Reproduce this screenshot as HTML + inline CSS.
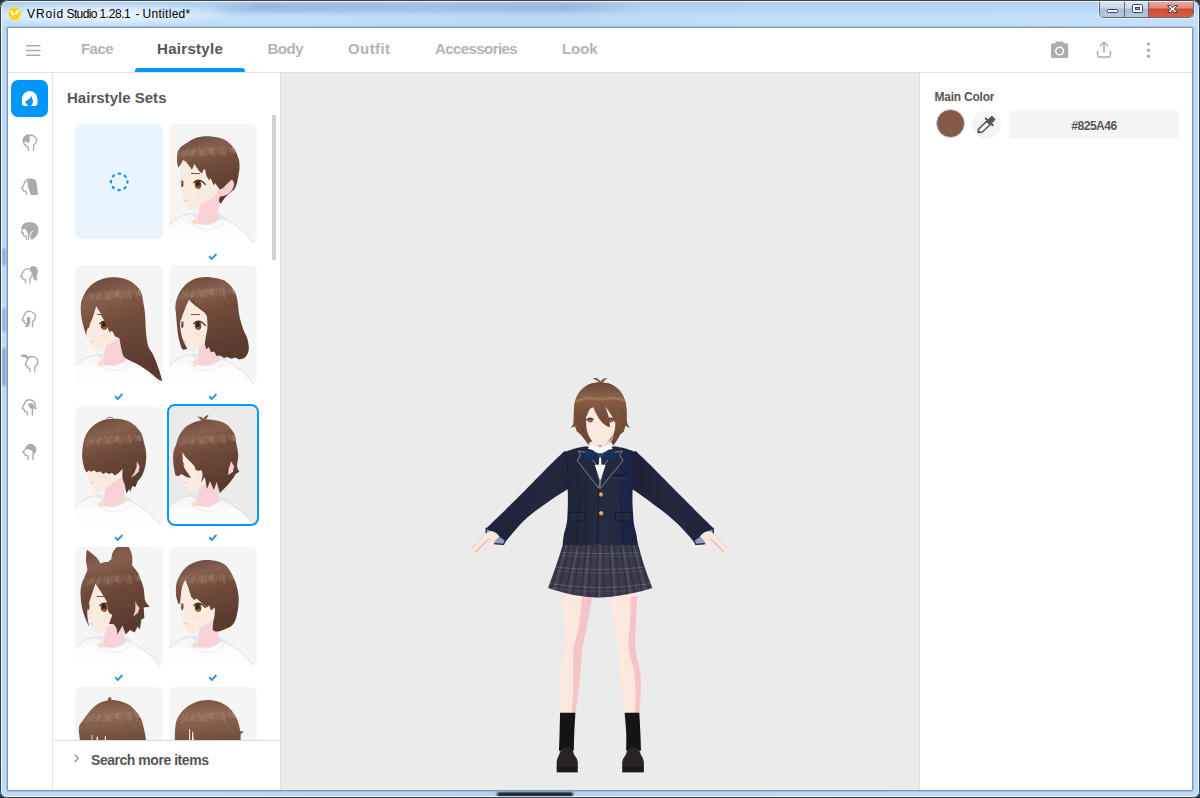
<!DOCTYPE html>
<html lang="en">
<head>
<meta charset="utf-8">
<title>VRoid Studio 1.28.1 - Untitled*</title>
<style>
*{box-sizing:border-box;margin:0;padding:0}
html,body{width:1200px;height:798px;overflow:hidden;background:#2a313b;font-family:"Liberation Sans",sans-serif}
svg{display:block;position:absolute;overflow:visible}
#win{position:absolute;left:0;top:0;width:1200px;height:798px;overflow:hidden;
 border-radius:8px 8px 7px 7px;
 background:linear-gradient(90deg,#bcdcfb 0,#badafa 18%,#b4d3f3 45%,#bbdafa 70%,#bedcfb 100%)}
#glow{position:absolute;left:-10px;top:3px;width:240px;height:22px;background:radial-gradient(ellipse at 45% 50%,rgba(255,255,255,.7) 0,rgba(255,255,255,.45) 40%,rgba(255,255,255,0) 75%)}
#win .smudge{position:absolute;left:205px;top:3px;width:430px;height:9px;background:linear-gradient(90deg,rgba(110,140,185,0),rgba(110,140,185,.4) 12%,rgba(120,150,195,.3) 50%,rgba(110,140,185,.35) 85%,rgba(110,140,185,0));filter:blur(2.500px)}
#frame-outer{position:absolute;left:0;top:0;width:1200px;height:798px;border:1px solid #39424f;border-radius:8px 8px 7px 7px;box-shadow:inset 0 0 0 1px rgba(255,255,255,.75);z-index:9}
.smg{position:absolute;background:#1a2233;filter:blur(1.2px);border-radius:2px}
#client-border{position:absolute;left:7px;top:27px;width:1186px;height:764px;background:#8294ab;border-radius:2px;box-shadow:0 0 0 1px rgba(150,172,200,.55)}
#client{position:absolute;left:8px;top:28px;width:1184px;height:762px;background:#fff;overflow:hidden}
#title{position:absolute;left:27px;top:6.500px;letter-spacing:.02px;font-size:12px;line-height:15px;color:#000;white-space:nowrap}
#title span{position:absolute;top:0}
#tbg{position:absolute;left:2px;top:2px;width:1196px;height:25px;background:linear-gradient(180deg,rgba(150,180,215,.28) 0,rgba(170,195,225,.12) 40%,rgba(255,255,255,.16) 55%,rgba(255,255,255,.06) 100%)}
#caps{position:absolute;left:1099px;top:0;width:95px;height:18px;border:1px solid #5b6776;border-top:none;border-radius:0 0 5px 5px;overflow:hidden;box-shadow:0 0 0 1px rgba(255,255,255,.55)}
#caps div{position:absolute;top:0;height:18px}
#cmin{left:0;width:25px;background:linear-gradient(#dfe9f3 0,#c9d7e6 45%,#a9bdd4 50%,#b9cbe0 100%);border-right:1px solid #5b6776}
#cmax{left:25px;width:24px;background:linear-gradient(#dfe9f3 0,#c9d7e6 45%,#a9bdd4 50%,#b9cbe0 100%);border-right:1px solid #5b6776}
#ccls{left:49px;width:45px;background:linear-gradient(#eeb2a5 0,#e08b78 45%,#cf4a30 50%,#d9644a 100%)}
#nav{position:absolute;left:0;top:0;width:1184px;height:45px;border-bottom:1px solid #e0e0e0;background:#fff}
.tab{position:absolute;top:11px;font-size:15px;line-height:20px;font-weight:bold;color:#b4b4b4;white-space:nowrap}
.tab.on{color:#555}
#uline{position:absolute;left:127px;top:40px;width:110px;height:4px;background:#0096fa;border-radius:3px 3px 0 0}
#side{position:absolute;left:0;top:45px;width:45px;height:717px;background:#fff;border-right:1px solid #e2e2e2}
#selbtn{position:absolute;left:3px;top:7px;width:37px;height:37px;border-radius:7px;background:#0096fa}
#list{position:absolute;left:45px;top:45px;width:227px;height:717px;background:#fff;overflow:hidden}
#list h2{position:absolute;left:14px;top:14.600px;font-size:15px;line-height:20px;color:#585858;font-weight:bold;white-space:nowrap;letter-spacing:.02px}
#sbar{position:absolute;left:219px;top:42px;width:4px;height:145px;background:#d2d2d2;border-radius:1px}
.card{position:absolute;width:88px;height:120px;border-radius:7px;background:#f5f5f5;overflow:hidden}
.card.none{background:#e8f4fe;height:115px}
.card.sel{background:#ebebeb}
#selring{position:absolute;left:114.300px;top:330.900px;width:91.600px;height:122.400px;border:2px solid #0a98f8;border-radius:8px}
.chk{position:absolute;width:9px;height:7px}
#foot{position:absolute;left:0;top:667px;width:227px;height:50px;background:#fff;border-top:1px solid #dcdcdc}
#foot span{position:absolute;left:38px;top:10px;font-size:14px;line-height:18px;font-weight:bold;color:#555;white-space:nowrap;letter-spacing:-.46px}
#view{position:absolute;left:272px;top:45px;width:640px;height:717px;background:#ebebeb;overflow:hidden;border-left:1px solid #dedede}
#right{position:absolute;left:911px;top:45px;width:273px;height:717px;background:#fff;border-left:1px solid #dedede}
#right .lbl{position:absolute;left:14.500px;top:17px;letter-spacing:-.22px;font-size:12px;line-height:14px;font-weight:bold;color:#555;white-space:nowrap}
#sw{position:absolute;left:15.500px;top:36.300px;width:29px;height:29px;border-radius:50%;background:#825a46;border:1px solid #d8d0cc}
#dropper{position:absolute;left:52px;top:36.500px;width:29px;height:29px;border-radius:50%;background:#f5f5f5}
#hex{position:absolute;left:89px;top:36.500px;width:170px;height:29px;border-radius:4px;background:#f5f5f5;text-align:center;font-size:12px;line-height:32px;font-weight:bold;color:#555;letter-spacing:-.45px}
</style>
</head>
<body>
<div id="win"><div id="tbg"></div><div id="glow"></div><div class="smudge"></div><div id="frame-outer"></div><div class="smg" style="left:497px;top:792px;width:76px;height:5px"></div><div class="smg" style="left:2px;top:248px;width:4px;height:18px;opacity:.35;background:#3a5a8a"></div><div class="smg" style="left:2px;top:308px;width:4px;height:24px;opacity:.3;background:#3a5a8a"></div><div class="smg" style="left:2px;top:348px;width:4px;height:38px;opacity:.4;background:#3a5a8a"></div><svg style="left:7px;top:6px" width="16" height="16" viewBox="0 0 16 16"><path d="M4.600 2L10.900 2L14 7.750L10.900 13.500L4.600 13.500L1.500 7.750Z" fill="#ffd500" stroke="#ffdc2e" stroke-width="1" stroke-linejoin="round"/><path d="M4.300 5.600L7.200 10.200L11.200 4.800" fill="none" stroke="#fff" stroke-width="1.800" stroke-linejoin="round" stroke-linecap="round"/><path d="M6.600 9.200L7.300 10.600L8.400 9.200Z" fill="#ff9a1a" stroke="#ff9a1a" stroke-width=".6"/></svg><div id="title"><span style="left:0;letter-spacing:.9px">VRoid</span> <span style="left:39.500px;letter-spacing:-.62px">Studio</span> <span style="left:72.500px;letter-spacing:-.42px">1.28.1</span> <span style="left:108.500px">-</span> <span style="left:115.500px;letter-spacing:.3px">Untitled*</span></div><div id="caps"><div id="cmin"></div><div id="cmax"></div><div id="ccls"></div></div><svg style="left:1099px;top:0" width="96" height="20" viewBox="0 0 96 20"><rect x="8.500" y="9.500" width="10" height="3" rx=".8" fill="#fff" stroke="#3d4757" stroke-width="1"/><rect x="33.500" y="4.500" width="10" height="8" rx="1" fill="#fff" stroke="#3d4757" stroke-width="1"/><rect x="36.500" y="7.500" width="4" height="2" fill="#8aa0c0" stroke="#3d4757" stroke-width="1"/><path d="M68.500 5.500L71.500 5.500L73.500 7.800L75.500 5.500L78.500 5.500L75.300 9L78.500 12.500L75.500 12.500L73.500 10.200L71.500 12.500L68.500 12.500L71.700 9Z" fill="#fff" stroke="#3d4757" stroke-width="1" stroke-linejoin="round"/></svg><div id="client-border"></div><div id="client"><div id="nav"><svg style="left:18px;top:17px" width="15" height="11" viewBox="0 0 15 11"><path d="M0 .8H14.400M0 5.500H14.400M0 10.200H14.400" stroke="#adadad" stroke-width="1.500" fill="none"/></svg><div class="tab" style="left:73px;letter-spacing:-0.55px">Face</div><div class="tab on" style="left:149px;letter-spacing:0.3px">Hairstyle</div><div class="tab" style="left:259.5px;letter-spacing:-0.5px">Body</div><div class="tab" style="left:340px;letter-spacing:0.4px">Outfit</div><div class="tab" style="left:427px;letter-spacing:-0.57px">Accessories</div><div class="tab" style="left:554px;letter-spacing:-0.1px">Look</div><div id="uline"></div><svg style="left:1042px;top:12px" width="20" height="20" viewBox="1050 40 20 20"><path fill="#adadad" d="M1056.200 41.400L1063 41.400L1064.400 43.600L1066.800 43.600C1067.700 43.600 1068.200 44.200 1068.200 45L1068.200 56.600C1068.200 57.500 1067.700 58 1066.800 58L1052.400 58C1051.500 58 1051 57.500 1051 56.600L1051 45C1051 44.200 1051.500 43.600 1052.400 43.600L1054.800 43.600Z"/><circle cx="1059.600" cy="51" r="4.600" fill="#fff"/><circle cx="1059.600" cy="51" r="3.100" fill="#adadad"/></svg><svg style="left:1087px;top:12px" width="20" height="20" viewBox="1095 40 20 20"><path fill="none" stroke="#adadad" stroke-width="1.500" stroke-linecap="round" stroke-linejoin="round" d="M1104 52L1104 42.400M1100.400 45.800L1104 42.200L1107.600 45.800M1097.600 51.400L1097.600 55.400C1097.600 56.400 1098.200 57 1099.200 57L1108.800 57C1109.800 57 1110.400 56.400 1110.400 55.400L1110.400 51.400"/></svg><svg style="left:1135px;top:12px" width="12" height="20" viewBox="1143 40 12 20"><circle cx="1148.500" cy="44.100" r="1.700" fill="#adadad"/><circle cx="1148.500" cy="50.200" r="1.700" fill="#adadad"/><circle cx="1148.500" cy="56.200" r="1.700" fill="#adadad"/></svg></div><div id="side"><div id="selbtn"></div><svg style="left:0;top:0" width="44" height="717" viewBox="8 73 44 717" fill="none" stroke-linecap="round" stroke-linejoin="round"><path fill="#fff" d="M29.700 90.900C25.200 90.900 22 94.600 21.900 99.600L21.900 103C21.900 104.800 22.800 105.900 24.400 105.900L27.600 105.900C28 105.900 28.100 105.600 27.800 105.300C26.400 104 25.400 102.400 25.600 100.900C28 100.200 30.200 98.600 31.500 95.800C31.700 97.800 32.200 99.400 33 101C33.100 102.600 32.400 104.200 31.300 105.300C31 105.600 31.100 105.900 31.500 105.900L35 105.900C36.600 105.900 37.500 104.800 37.500 103L37.500 99.600C37.400 94.600 34.200 90.900 29.700 90.900Z"/><path fill="#ababab" d="M22.200 141.200C22.600 138 24.600 135.200 27.600 134.300C28.200 134.100 28.900 134.200 29.400 134.600L29.800 140.400C29.600 141.800 29.200 142.600 28.500 143.300C27.600 142.200 26.600 141.500 25.400 141.400C24.600 141.400 24.200 141.800 23.800 142.200Z"/><path stroke="#ababab" stroke-width="1.35" d="M29.600 135.300C33.400 134.900 36.600 137.400 36.600 140.600C36.600 142.800 35.200 144.200 33.600 145.400L33.500 150.400M23.800 142L24 144.100L25.500 144.700L25.800 146.200L28.200 147.100L28.500 150.400"/><path fill="#ababab" d="M27.300 178.500L31.600 178.500C34.600 178.700 36.600 180.800 36.700 183.600L37.900 194C38 194.500 37.700 194.900 37.200 194.900L31.400 194.900C31 194.900 30.800 194.700 30.600 194.200L28.600 188.600C27.800 186.400 27.400 184 27.300 181.500Z"/><path stroke="#ababab" stroke-width="1.35" d="M27.600 179.400C26 180.200 24.800 181.600 24.300 183L23.700 184.800L21.600 188.100L23.100 188.800L23.400 190.800L26.100 191.700L26.700 194.400"/><path fill="#ababab" d="M21.300 228.400C21.600 225 24 222.600 28 222.200L31.500 222.200C35.600 222.400 38.500 225.400 38.500 229.400C38.500 233.400 36.400 237.200 32.400 239.200L31.200 239.400C30.400 238 30 236.800 30.400 235.600C31 234 32 232.600 33 231.200L32.200 230.600L29.200 235.600L28.300 235C27.800 233 26.600 230.800 24.900 229.100L23.400 229.100L21.600 229Z"/><path stroke="#ababab" stroke-width="1.35" d="M28.500 235L28.800 239.500M22.600 229.200L21.300 232.400L23.100 233L23.400 235.100L26.100 236.300L26.600 239.400"/><path stroke="#ababab" stroke-width="1.35" d="M20.700 276.300L23.100 271.900C23.600 270.300 25 269.200 26.800 268.900C28.400 268.700 29.800 269.300 30.800 270.300C32 271.400 32.500 273 32.400 274.600C32.300 276.200 31.400 277.300 30 278.200L30 283M20.700 276.400L22.500 277L22.500 278.800L25.200 279.700L25.700 283"/><path fill="#ababab" d="M29.700 268.400C30.200 266.800 31.600 265.900 33.400 265.900C36 265.900 37.600 268 37.800 271C37.900 273.600 36.800 275.800 36.700 277.400C36.700 278.200 37 278.800 37.500 279.300C36.800 280.400 35.800 280.700 35 280.400C33.800 279.800 33.200 278.400 33 276.400C32.900 274.600 33.200 272.800 31.800 271C31.200 270.300 30.400 269.400 29.700 268.400Z"/><path stroke="#ababab" stroke-width="1.35" d="M32.400 326.800L32.400 321.900C34.200 320.700 35.400 319.200 35.400 317C35.400 313.800 32.600 311.300 29 311.300C26.400 311.300 24.600 313 24 315.900L22.200 320.100L24 320.700L24.300 322.800L25.800 323.700"/><path fill="#ababab" d="M27 317.600C27 317.200 27.300 316.900 27.700 316.900L29.400 316.900C29.900 316.900 30.200 317.200 30.200 317.700L30.200 320C30.200 322 29.800 324 29 325.600C28.600 326.500 28 327.100 27.200 327.100L25.600 327.100C25.100 327.100 24.900 326.700 25.200 326.300C26.400 324.800 27 323 27 320.800Z"/><path stroke="#ababab" stroke-width="1.35" d="M34.800 371.600L34.800 366.800C36.600 365.600 37.800 364 37.800 362C37.800 358.900 35.200 356.500 32 356.500C29.800 356.500 28.200 357.600 27.400 359.400L26.700 361.100L25.200 364.700L27 365.600L27.300 367.700L29.700 368.600L30 371.600"/><path fill="#ababab" d="M20.600 356.200C21.400 354.900 22.800 354.200 24.400 354.300C26.600 354.500 28.200 356.200 28.800 358.200L27.600 360.200C27 358.800 25.800 357.600 24.200 357.100C23 356.800 21.600 357 20.600 356.200Z"/><path stroke="#ababab" stroke-width="1.35" d="M27.300 415L27 412L24.300 411.100L24 409L22.200 408.100L24.300 403.900C25 401.400 27 399.700 29.600 399.700C33 399.700 35.400 402.400 35.400 405.600C35.400 406.600 35.300 407.400 35 408.200L36.100 408.500M32.400 415L32.400 409"/><path fill="#ababab" d="M28.200 403.200L33 403.200L33.200 405.800L33.800 405.800L33.600 403.400C34.400 404.600 34.800 406 34.800 407.600L33.800 409L32.400 409.400C30.200 408.600 28.600 406.600 28.200 404.600Z"/><path fill="#ababab" d="M25.100 449.200C25.400 446 27.600 443.900 30.600 443.900C34 443.900 36.400 446.400 36.400 449.400C36.400 451.400 35.400 453.200 33.800 454.600L32.800 454.200C33 452.400 32.200 451 30.800 450.100C29.600 449.400 28.200 449.100 26.600 449.200Z"/><path stroke="#ababab" stroke-width="1.35" d="M25.200 449.100L22.800 452.400L24.900 453.300L25.200 455.100L27.900 456L28.200 459.300M33 454.200L33 459.300"/></svg></div><div id="list"><svg width="0" height="0" style="left:-10px;top:-10px"><defs><linearGradient id="hg" x1="0" y1="0" x2="0.25" y2="1"><stop offset="0" stop-color="#6a4537"/><stop offset=".26" stop-color="#875f4e"/><stop offset=".5" stop-color="#734c3c"/><stop offset="1" stop-color="#593a2e"/></linearGradient><linearGradient id="hg2" x1="0" y1="0" x2="0.1" y2="1"><stop offset="0" stop-color="#76503f"/><stop offset=".3" stop-color="#8f6653"/><stop offset=".6" stop-color="#85604d"/><stop offset="1" stop-color="#70493a"/></linearGradient><linearGradient id="sg" x1="0" y1="0" x2="0" y2="1"><stop offset="0" stop-color="#f4f4f7"/><stop offset=".45" stop-color="#fdfdfd"/><stop offset="1" stop-color="#ffffff"/></linearGradient><filter id="b1" x="-20%" y="-20%" width="140%" height="140%"><feGaussianBlur stdDeviation="0.7"/></filter><filter id="b0" x="-5%" y="-20%" width="110%" height="140%"><feGaussianBlur stdDeviation="0.35"/></filter><filter id="b2" x="-30%" y="-30%" width="160%" height="160%"><feGaussianBlur stdDeviation="1.6"/></filter><g id="bust"><path fill="url(#sg)" stroke="#c9c9cf" stroke-width=".5" d="M-2 104C2 99 6 95.500 10 93.200C14 91.200 19 89.800 24.500 89.500C27 96 33 99.500 38 100.500C44 100.500 49.500 96.500 51.500 91C54.500 92.800 57.500 95 59.700 97C63.500 99.500 67.500 102 71 104.500C76 109 80.500 114 84.500 118.800L90 124L-2 124Z"/><path fill="#dfe7f6" d="M22.5 90.4C24 88.8 26 88.2 28 89L29 93C26.5 92.8 24.5 92 22.5 90.4ZM50 90.5C51.5 91 52.8 91.6 53.8 92.6C55.5 94 57 95.5 58 97C55 95.5 52.5 94.5 49.5 94Z"/><path fill="none" stroke="#f0f0f4" stroke-width="1.400" d="M19 94C22 100.500 30 105.500 38 105.500C46.500 105.500 52.500 102 55.500 97"/><path fill="#f8d2d5" d="M30.500 80.500L49 70.500C50.500 72.500 51.500 75 51.400 77.500C50.600 81 49.600 84.500 49.200 87.300L51.500 95.500L44.700 98.500L35.700 100.800L28.200 100L29 91C29.600 87.500 30.200 84 30.500 80.500Z"/><path fill="#f8dcc8" d="M22.200 97.800L28.600 93.300L28.200 100.200L25.200 101.100Z"/><path fill="#f9ebe0" d="M12 38C10.8 45 10.8 53 11.2 59.7C11 62 11.2 64 11.7 66C12 68.5 12.8 70.5 13.6 72.5C15 77.5 17.2 82 20 85.4C21.3 86.6 22.8 86.7 24 86.2C26.5 85 28.8 83 30.5 81.4C35.5 78.8 40 75.8 44.1 72.5C46.6 70.5 48.8 68.4 50.6 66C54 64 57.5 62 60.2 59.7L62 40L40 22L16 28Z"/><path fill="#f8d2d5" opacity=".8" d="M30.5 81.4C35.5 78.8 40 75.8 44.1 72.5C46.6 70.5 48.8 68.4 50.6 66L51.5 70C46 74.5 38 79.5 30.5 82.5Z"/><path fill="#f7cfd2" d="M49 66.500C52 61.500 57 57 62.800 54.500C65.500 55.500 66.500 58.500 65.500 61.500C64.500 65 62.500 67.500 60.500 69.500C57.500 72 54 73.500 50 74C49 71.500 48.500 69 49 66.500Z"/><ellipse cx="30" cy="71" rx="5.5" ry="3" fill="#f5d3c4" opacity=".2" filter="url(#b1)"/><clipPath id="eyc"><path d="M24.900 58.600C26.500 56.600 29.500 55.800 32 57C34 58 35.500 59.500 36.300 61C35.500 63 34 64.500 32 65C29.500 65.300 27 64.800 25.600 62.500Z"/></clipPath><path fill="#fffdfb" d="M24.900 58.600C26.500 56.600 29.500 55.800 32 57C34 58 35.500 59.500 36.300 61C35.500 63 34 64.500 32 65C29.500 65.300 27 64.800 25.600 62.500Z"/><g clip-path="url(#eyc)"><ellipse cx="29" cy="60.700" rx="3.400" ry="4.300" fill="#7b4626"/><ellipse cx="28.800" cy="59.600" rx="2" ry="2.600" fill="#3e2113"/><ellipse cx="29.200" cy="63.300" rx="2" ry="1.300" fill="#a5622c" opacity=".8"/></g><path fill="none" stroke="#3a241c" stroke-width="1.200" stroke-linecap="round" d="M24.700 58.700C26.500 56.400 29.500 55.600 32.200 56.900C34 57.800 35.400 59.200 36.300 60.600"/><path fill="#6a4028" d="M12.6 57.2C13.8 57.2 14.6 58.6 14.5 60.4C14.4 62 13.6 63.2 12.6 63.2C12.2 61.4 12.2 59 12.6 57.2Z"/><path fill="none" stroke="#4a342c" stroke-width=".8" stroke-linecap="round" d="M12.2 57C13.4 56.6 14.4 57 15 58"/><path fill="none" stroke="#5b4136" stroke-width=".9" stroke-linecap="round" d="M22.400 49.500L30.500 49.600"/><path fill="none" stroke="#c9a097" stroke-width=".5" stroke-linecap="round" d="M15.6 76.5L18 77"/></g><g id="ring" fill="none" stroke-linecap="round" filter="url(#b0)" opacity=".68"><path d="M8 28L6 32.3" stroke="#c4a799" stroke-width="1.6" opacity="0.1"/><path d="M9.8 27.8L7.5 33.1" stroke="#c4a799" stroke-width="1" opacity="0.2"/><path d="M11.5 26.5L9.1 32.2" stroke="#c4a799" stroke-width="1" opacity="0.1"/><path d="M13.4 26.2L10.4 33.8" stroke="#c4a799" stroke-width="1" opacity="0.2"/><path d="M15.1 26.1L12.1 34.3" stroke="#c4a799" stroke-width="1.5" opacity="0.3"/><path d="M15.9 28.8L14.5 32.8" stroke="#c4a799" stroke-width="1.8" opacity="0.3"/><path d="M17.6 26.8L16.1 31.2" stroke="#c4a799" stroke-width="1.2" opacity="0.6"/><path d="M19.5 25.6L17.5 32.2" stroke="#c4a799" stroke-width="1.6" opacity="0.3"/><path d="M20.7 27.4L19.5 31.6" stroke="#c4a799" stroke-width="1" opacity="0.2"/><path d="M22.5 26.7L21 32.6" stroke="#c4a799" stroke-width="1.2" opacity="0.4"/><path d="M24 26.4L22.8 31.7" stroke="#c4a799" stroke-width="1.8" opacity="0.4"/><path d="M25.8 25.1L24.3 31.8" stroke="#c4a799" stroke-width="1.5" opacity="0.4"/><path d="M27.2 26.6L26.2 32" stroke="#c4a799" stroke-width="2" opacity="0.1"/><path d="M29 24.7L27.7 32.4" stroke="#c4a799" stroke-width="1.1" opacity="0.2"/><path d="M30.5 24L29.4 31.3" stroke="#c4a799" stroke-width="1.7" opacity="0.3"/><path d="M32 26.4L31.3 31.9" stroke="#c4a799" stroke-width="1.7" opacity="0.3"/><path d="M33.6 25.3L32.9 31.6" stroke="#c4a799" stroke-width="1.8" opacity="0.5"/><path d="M35.2 24.5L34.6 31.8" stroke="#c4a799" stroke-width="1" opacity="0.4"/><path d="M36.8 23.9L36.3 32.8" stroke="#c4a799" stroke-width="1.8" opacity="0.3"/><path d="M38.3 24L38 31.4" stroke="#c4a799" stroke-width="0.9" opacity="0.4"/><path d="M39.9 24.9L39.8 29.4" stroke="#c4a799" stroke-width="1" opacity="0.6"/><path d="M41.4 24.3L41.5 29.6" stroke="#c4a799" stroke-width="1.3" opacity="0.6"/><path d="M43 23.6L43.2 29.9" stroke="#c4a799" stroke-width="1.5" opacity="0.6"/><path d="M44.5 24L45 32.3" stroke="#c4a799" stroke-width="1.2" opacity="0.3"/><path d="M46.1 22.9L46.7 31.3" stroke="#c4a799" stroke-width="2" opacity="0.2"/><path d="M47.8 24.1L48.3 29.2" stroke="#c4a799" stroke-width="1.2" opacity="0.3"/><path d="M49.4 24.7L50 30" stroke="#c4a799" stroke-width="0.9" opacity="0.2"/><path d="M50.8 23.5L51.8 30.2" stroke="#c4a799" stroke-width="1.9" opacity="0.3"/><path d="M52.4 23.6L53.5 30.5" stroke="#c4a799" stroke-width="1.6" opacity="0.1"/><path d="M53.9 23.8L55.3 31.6" stroke="#c4a799" stroke-width="1.9" opacity="0.4"/><path d="M55.6 23.7L56.8 29.6" stroke="#c4a799" stroke-width="1" opacity="0.4"/><path d="M57.4 23.8L58.4 28" stroke="#c4a799" stroke-width="1.1" opacity="0.2"/><path d="M59 24.3L60 28.4" stroke="#c4a799" stroke-width="0.9" opacity="0.2"/><path d="M60.4 23L61.9 28.6" stroke="#c4a799" stroke-width="0.9" opacity="0.6"/><path d="M62.1 24.4L63.5 29" stroke="#c4a799" stroke-width="1.2" opacity="0.3"/><path d="M63.7 23.9L65.1 28.3" stroke="#c4a799" stroke-width="1.8" opacity="0.7"/><path d="M65.1 23.2L67.1 29.3" stroke="#c4a799" stroke-width="1" opacity="0.2"/><path d="M66.8 23.4L68.6 28.4" stroke="#c4a799" stroke-width="1.8" opacity="0.2"/><path d="M67.8 21.1L70.9 29.2" stroke="#c4a799" stroke-width="1.5" opacity="0.1"/><path d="M70.2 24.2L71.8 28" stroke="#c4a799" stroke-width="1.5" opacity="0.4"/><path d="M14.1 21.5L-12.3 29.9" stroke="#5e4034" stroke-width=".6" opacity="0.2"/><path d="M18.1 21.4L2.5 29" stroke="#5e4034" stroke-width=".6" opacity="0.4"/><path d="M17.2 24.3L-10.6 38" stroke="#5e4034" stroke-width=".6" opacity="0.3"/><path d="M20.4 26.3L-7.2 45.1" stroke="#5e4034" stroke-width=".6" opacity="0.4"/><path d="M17 30.7L-8.8 54.6" stroke="#5e4034" stroke-width=".6" opacity="0.4"/><path d="M19.5 33L5.6 53.5" stroke="#5e4034" stroke-width=".6" opacity="0.3"/><path d="M23.8 27.6L14.3 53.2" stroke="#5e4034" stroke-width=".6" opacity="0.2"/><path d="M26.4 29.1L14.8 60.7" stroke="#5e4034" stroke-width=".6" opacity="0.4"/><path d="M25.7 34.7L13.9 73.1" stroke="#5e4034" stroke-width=".6" opacity="0.4"/><path d="M28.7 36.5L14.6 88.1" stroke="#5e4034" stroke-width=".6" opacity="0.3"/><path d="M34 32.6L28.6 68.5" stroke="#5e4034" stroke-width=".6" opacity="0.2"/><path d="M36.8 33.1L31.9 79.3" stroke="#5e4034" stroke-width=".6" opacity="0.4"/><path d="M39.3 38L37.8 82.3" stroke="#5e4034" stroke-width=".6" opacity="0.3"/><path d="M42.7 37.7L43.6 72.4" stroke="#5e4034" stroke-width=".6" opacity="0.3"/><path d="M46.3 38.1L51.8 89.1" stroke="#5e4034" stroke-width=".6" opacity="0.4"/><path d="M48.6 34.3L53.7 69.5" stroke="#5e4034" stroke-width=".6" opacity="0.4"/><path d="M51 32.3L63.8 79.6" stroke="#5e4034" stroke-width=".6" opacity="0.4"/><path d="M53.9 31.3L65.2 68.1" stroke="#5e4034" stroke-width=".6" opacity="0.4"/><path d="M58 31.5L68.2 62" stroke="#5e4034" stroke-width=".6" opacity="0.2"/><path d="M56.9 26.6L80.3 66" stroke="#5e4034" stroke-width=".6" opacity="0.4"/><path d="M58.6 30.6L83.1 58.7" stroke="#5e4034" stroke-width=".6" opacity="0.4"/><path d="M63.6 30.1L81 48.9" stroke="#5e4034" stroke-width=".6" opacity="0.3"/><path d="M60.9 26.1L72.8 38.6" stroke="#5e4034" stroke-width=".6" opacity="0.4"/><path d="M65.7 24.5L88.3 37" stroke="#5e4034" stroke-width=".6" opacity="0.4"/><path d="M64.4 21.4L94.7 30.2" stroke="#5e4034" stroke-width=".6" opacity="0.4"/><path d="M62.6 21.2L80.1 28.8" stroke="#5e4034" stroke-width=".6" opacity="0.3"/></g></defs></svg><h2>Hairstyle Sets</h2><div class="card none" style="left:21.5px;top:51px"><svg style="left:34px;top:48px" width="20" height="20" viewBox="0 0 20 20"><circle cx="10.200" cy="9.850" r="8.270" fill="none" stroke="#0a98f8" stroke-width="2.200" stroke-dasharray="1.600 4.895" stroke-dashoffset=".800" stroke-linecap="round"/></svg></div><div class="card " style="left:116.3px;top:51px;height:120px"><svg width="88" height="124" viewBox="0 0 88 124" style="left:0;top:0"><clipPath id="hc2"><path d="M9.1 43.6C8.9 42.3 8.1 38.4 8 36C7.9 33.6 8 31 8.5 29C9 27 9.6 25.6 11 24C12.4 22.4 14.1 21.4 16.9 19.6C19.7 17.9 23.7 14.7 28 13.5C32.3 12.3 37.9 12.1 42.5 12.4C47.1 12.8 51.6 13.6 55.4 15.6C59.1 17.6 62.6 21.1 65 24.4C67.4 27.7 68.9 32.3 69.8 35.6C70.7 38.9 70.5 41.4 70.5 44C70.5 46.6 69.9 48.6 69.5 51C69.1 53.4 68.7 56.2 68.1 58.5C67.5 60.8 66.3 63.5 65.9 64.5C65.3 65.1 63.6 66.9 62.1 68.3C60.6 69.7 58 71.5 56.8 72.8C55.5 74 55.5 74.6 54.6 75.8C53.7 77 52.1 79.3 51.6 80C51.3 79.4 50.1 77.8 50 76.6C49.9 75.4 50.7 73.4 50.8 72.8C51.8 72.5 54.9 72.2 56.8 71.3C58.7 70.4 60.7 69.2 62.1 67.5C63.5 65.8 64.8 62.5 65.1 60.8C65.4 59 64.4 57.9 64 57C63.6 56.1 63 55.8 62.8 55.5C62 56.2 59.5 58.6 58 60C56.5 61.4 55.2 63.1 54 64C52.8 64.9 51.3 65.2 50.8 65.4L46 59L44.8 61.6L41.5 54L40.3 56.3C39.8 55.6 38.2 53.9 37.5 52C36.8 50.1 36.2 46.2 36 45C35.8 45.2 35 45.2 34.5 46C34 46.8 33.1 49 32.8 49.6C32.5 49.3 31.8 48.9 31 48C30.2 47.1 28.9 45.3 28 44C27.1 42.7 25.9 40.7 25.5 40C25.3 40.3 24.9 41 24.5 42C24.1 43 23.2 45.2 23 45.8C22.7 45.3 22 44.3 21 43C20 41.7 18.2 39.2 17 38C15.8 36.8 14.5 36.3 14 36C13.7 36.7 12.8 38.7 12 40C11.2 41.3 9.6 43 9.1 43.6Z"/></clipPath><use href="#bust"/><path fill="url(#hg)" d="M9.1 43.6C8.9 42.3 8.1 38.4 8 36C7.9 33.6 8 31 8.5 29C9 27 9.6 25.6 11 24C12.4 22.4 14.1 21.4 16.9 19.6C19.7 17.9 23.7 14.7 28 13.5C32.3 12.3 37.9 12.1 42.5 12.4C47.1 12.8 51.6 13.6 55.4 15.6C59.1 17.6 62.6 21.1 65 24.4C67.4 27.7 68.9 32.3 69.8 35.6C70.7 38.9 70.5 41.4 70.5 44C70.5 46.6 69.9 48.6 69.5 51C69.1 53.4 68.7 56.2 68.1 58.5C67.5 60.8 66.3 63.5 65.9 64.5C65.3 65.1 63.6 66.9 62.1 68.3C60.6 69.7 58 71.5 56.8 72.8C55.5 74 55.5 74.6 54.6 75.8C53.7 77 52.1 79.3 51.6 80C51.3 79.4 50.1 77.8 50 76.6C49.9 75.4 50.7 73.4 50.8 72.8C51.8 72.5 54.9 72.2 56.8 71.3C58.7 70.4 60.7 69.2 62.1 67.5C63.5 65.8 64.8 62.5 65.1 60.8C65.4 59 64.4 57.9 64 57C63.6 56.1 63 55.8 62.8 55.5C62 56.2 59.5 58.6 58 60C56.5 61.4 55.2 63.1 54 64C52.8 64.9 51.3 65.2 50.8 65.4L46 59L44.8 61.6L41.5 54L40.3 56.3C39.8 55.6 38.2 53.9 37.5 52C36.8 50.1 36.2 46.2 36 45C35.8 45.2 35 45.2 34.5 46C34 46.8 33.1 49 32.8 49.6C32.5 49.3 31.8 48.9 31 48C30.2 47.1 28.9 45.3 28 44C27.1 42.7 25.9 40.7 25.5 40C25.3 40.3 24.9 41 24.5 42C24.1 43 23.2 45.2 23 45.8C22.7 45.3 22 44.3 21 43C20 41.7 18.2 39.2 17 38C15.8 36.8 14.5 36.3 14 36C13.7 36.7 12.8 38.7 12 40C11.2 41.3 9.6 43 9.1 43.6Z"/><g clip-path="url(#hc2)"><use href="#ring" y="0"/></g></svg></div><div class="card " style="left:21.5px;top:192px;height:120px"><svg width="88" height="124" viewBox="0 0 88 124" style="left:0;top:0"><clipPath id="hc3"><path d="M11.9 74.4C11.7 73.5 11.4 71.2 10.8 69.1C10.2 67 9.2 64.6 8.5 61.6C7.8 58.6 6.7 54.6 6.3 51C5.9 47.4 5.5 43.2 5.9 39.8C6.3 36.4 6.9 34 8.5 30.8C10.1 27.6 12.3 23.3 15.7 20.4C19.1 17.5 24.1 14.8 28.6 13.5C33.1 12.2 38.5 11.9 43 12.4C47.5 12.9 52.1 14.1 55.9 16.4C59.6 18.7 63.4 22.1 65.5 26C67.6 29.9 67.9 35.6 68.7 39.8C69.5 44 69.8 46.6 70.2 51C70.6 55.4 70.4 61.1 70.9 66.1C71.4 71.1 72 77 73.2 81C74.4 85 76.5 86 78.3 90C80.1 94 82.5 100.4 84 104.7C85.5 109 86.7 114 87.2 115.9C86.5 115.6 85.4 115.9 83.1 114.3C80.8 112.7 77.2 109 73.5 106.3C69.8 103.6 64.5 100.3 60.7 98.2C57 96.1 53.1 94.9 51 93.4C48.9 91.9 48.7 91.8 47.8 89.4C46.9 87 45.9 81.6 45.4 79C44.9 76.4 44.7 74.5 44.6 73.6C44.1 73.3 42.4 72.5 41.6 72.1C40.9 71.7 40.4 71.5 40.1 71.4C39.6 70.5 37.9 66.6 37 66C36.1 65.4 35.2 67.3 34.8 67.6C34.4 66.8 33.4 64.9 32.6 63.1C31.9 61.3 31.2 58.8 30.3 57C29.4 55.2 28.2 54.2 27.3 52.6C26.4 51 26 49.2 25 47.3C24 45.4 21.9 42.3 21.3 41.3C21.1 42 20.4 43.8 19.8 45.8C19.2 47.8 18.5 50.8 17.5 53.3C16.5 55.8 14.8 58.4 13.8 60.8C12.8 63.2 11.8 65.3 11.5 67.6C11.2 69.9 11.8 73.3 11.9 74.4Z"/></clipPath><use href="#bust"/><path fill="url(#hg)" d="M11.9 74.4C11.7 73.5 11.4 71.2 10.8 69.1C10.2 67 9.2 64.6 8.5 61.6C7.8 58.6 6.7 54.6 6.3 51C5.9 47.4 5.5 43.2 5.9 39.8C6.3 36.4 6.9 34 8.5 30.8C10.1 27.6 12.3 23.3 15.7 20.4C19.1 17.5 24.1 14.8 28.6 13.5C33.1 12.2 38.5 11.9 43 12.4C47.5 12.9 52.1 14.1 55.9 16.4C59.6 18.7 63.4 22.1 65.5 26C67.6 29.9 67.9 35.6 68.7 39.8C69.5 44 69.8 46.6 70.2 51C70.6 55.4 70.4 61.1 70.9 66.1C71.4 71.1 72 77 73.2 81C74.4 85 76.5 86 78.3 90C80.1 94 82.5 100.4 84 104.7C85.5 109 86.7 114 87.2 115.9C86.5 115.6 85.4 115.9 83.1 114.3C80.8 112.7 77.2 109 73.5 106.3C69.8 103.6 64.5 100.3 60.7 98.2C57 96.1 53.1 94.9 51 93.4C48.9 91.9 48.7 91.8 47.8 89.4C46.9 87 45.9 81.6 45.4 79C44.9 76.4 44.7 74.5 44.6 73.6C44.1 73.3 42.4 72.5 41.6 72.1C40.9 71.7 40.4 71.5 40.1 71.4C39.6 70.5 37.9 66.6 37 66C36.1 65.4 35.2 67.3 34.8 67.6C34.4 66.8 33.4 64.9 32.6 63.1C31.9 61.3 31.2 58.8 30.3 57C29.4 55.2 28.2 54.2 27.3 52.6C26.4 51 26 49.2 25 47.3C24 45.4 21.9 42.3 21.3 41.3C21.1 42 20.4 43.8 19.8 45.8C19.2 47.8 18.5 50.8 17.5 53.3C16.5 55.8 14.8 58.4 13.8 60.8C12.8 63.2 11.8 65.3 11.5 67.6C11.2 69.9 11.8 73.3 11.9 74.4Z"/><g clip-path="url(#hc3)"><use href="#ring" y="2"/></g></svg></div><div class="card " style="left:116.3px;top:192px;height:120px"><svg width="88" height="124" viewBox="0 0 88 124" style="left:0;top:0"><clipPath id="hc4"><path d="M14.7 85C14.3 84.6 13.4 84.9 12.5 82.8C11.6 80.7 10.2 75.9 9.5 72.3C8.8 68.7 8.4 64.5 8 61C7.6 57.5 7.5 54.5 7.2 51C7 47.5 6 43.7 6.5 39.8C7 35.9 8.4 31.2 10.4 27.6C12.4 24 15.3 20.5 18.5 18C21.7 15.5 25.7 13.7 29.7 12.8C33.7 11.9 38.2 11.9 42.5 12.4C46.8 12.9 51.6 13.5 55.4 15.6C59.1 17.7 62.8 21.8 65 25.2C67.2 28.6 67.6 31.7 68.5 36C69.4 40.3 69.3 46 70.4 51C71.5 56 73.7 62.5 74.9 66.1C76.2 69.6 77.1 69.6 77.9 72.3C78.7 75 79.7 79.2 79.8 82C79.9 84.8 79.4 86.9 78.6 88.8C77.8 90.7 76.3 92.3 74.9 93.3C73.5 94.2 71.2 94.3 70.4 94.5L66 92.5L62.8 93.8L58 92L55.3 92.9L50.8 90.5L47.8 91L45 86.5L41.8 87.3L40 82L37.3 84.3L35.8 79C35.9 78.1 36.1 76.2 36.5 73.6C36.9 70.9 38.1 66.6 38.4 63.1C38.6 59.6 38.4 55.1 38 52.6C37.6 50.1 36.9 49.4 35.8 48C34.7 46.6 33 45.7 31.3 44.3C29.6 42.9 27.2 41.4 25.3 39.8C23.4 38.2 20.9 35.4 20 34.5C19.6 35.4 18.6 37.7 17.7 39.8C16.8 41.9 15.6 45 14.7 47.3C13.8 49.5 13.1 51.4 12.5 53.3C11.9 55.2 11 55.8 11 58.6C11 61.4 11.8 66.6 12.5 69.9C13.2 73.2 14.5 76 15.5 78.3C16.5 80.6 18 82.7 18.5 83.6L14.7 85Z"/></clipPath><use href="#bust"/><path fill="url(#hg)" d="M14.7 85C14.3 84.6 13.4 84.9 12.5 82.8C11.6 80.7 10.2 75.9 9.5 72.3C8.8 68.7 8.4 64.5 8 61C7.6 57.5 7.5 54.5 7.2 51C7 47.5 6 43.7 6.5 39.8C7 35.9 8.4 31.2 10.4 27.6C12.4 24 15.3 20.5 18.5 18C21.7 15.5 25.7 13.7 29.7 12.8C33.7 11.9 38.2 11.9 42.5 12.4C46.8 12.9 51.6 13.5 55.4 15.6C59.1 17.7 62.8 21.8 65 25.2C67.2 28.6 67.6 31.7 68.5 36C69.4 40.3 69.3 46 70.4 51C71.5 56 73.7 62.5 74.9 66.1C76.2 69.6 77.1 69.6 77.9 72.3C78.7 75 79.7 79.2 79.8 82C79.9 84.8 79.4 86.9 78.6 88.8C77.8 90.7 76.3 92.3 74.9 93.3C73.5 94.2 71.2 94.3 70.4 94.5L66 92.5L62.8 93.8L58 92L55.3 92.9L50.8 90.5L47.8 91L45 86.5L41.8 87.3L40 82L37.3 84.3L35.8 79C35.9 78.1 36.1 76.2 36.5 73.6C36.9 70.9 38.1 66.6 38.4 63.1C38.6 59.6 38.4 55.1 38 52.6C37.6 50.1 36.9 49.4 35.8 48C34.7 46.6 33 45.7 31.3 44.3C29.6 42.9 27.2 41.4 25.3 39.8C23.4 38.2 20.9 35.4 20 34.5C19.6 35.4 18.6 37.7 17.7 39.8C16.8 41.9 15.6 45 14.7 47.3C13.8 49.5 13.1 51.4 12.5 53.3C11.9 55.2 11 55.8 11 58.6C11 61.4 11.8 66.6 12.5 69.9C13.2 73.2 14.5 76 15.5 78.3C16.5 80.6 18 82.7 18.5 83.6L14.7 85Z"/><g clip-path="url(#hc4)"><use href="#ring" y="0"/></g><path fill="none" stroke="#533629" stroke-width="1.6" stroke-dasharray="1.1 .9" opacity=".7" d="M21.500 35.500L36 47"/></svg></div><div class="card " style="left:21.5px;top:332.5px;height:120px"><svg width="88" height="124" viewBox="0 0 88 124" style="left:0;top:0"><clipPath id="hc5"><path d="M11.5 66.6C11.1 65.8 10 64.3 9.3 62C8.6 59.7 7.7 56 7.4 53C7.1 50 7 47.4 7.4 43.7C7.9 40 8.4 34.7 10.1 30.8C11.8 26.9 14.2 23.2 17.3 20.4C20.4 17.6 24.3 15.3 28.6 14C32.9 12.7 38.5 12.4 43 12.8C47.5 13.2 52.1 14.2 55.9 16.4C59.6 18.6 63.2 22.4 65.5 26C67.8 29.6 68.4 34.1 69.4 38C70.4 41.9 71.2 45.5 71.3 49.3C71.4 53.1 70.9 57.2 70.2 60.6C69.5 64 67.7 68.1 67.2 69.6L62.6 75.6L60.4 80.9L57.4 80L55.1 86L54.4 83L51.4 87.6C51.1 86.2 50.5 81.9 49.9 79.4C49.3 76.9 48 75.4 47.6 72.6C47.2 69.8 47.6 64.4 47.6 62.8C47 63.4 45.3 65.4 44 66.5C42.7 67.6 40.7 69.1 40 69.6C39.5 69.2 38 67.3 37 67C36 66.7 34.5 67.8 34 68C33.5 67.8 32 66.5 31 66.5C30 66.5 28.5 67.8 28 68C27.5 67.6 26 65.7 25 65.5C24 65.3 22.5 66.4 22 66.6C21.5 66.2 20 64.6 19 64.5C18 64.4 16.5 65.6 16 65.8C15.7 65.6 14.8 64.4 14 64.5C13.2 64.6 11.9 66.2 11.5 66.6Z"/></clipPath><use href="#bust"/><path fill="url(#hg)" d="M11.5 66.6C11.1 65.8 10 64.3 9.3 62C8.6 59.7 7.7 56 7.4 53C7.1 50 7 47.4 7.4 43.7C7.9 40 8.4 34.7 10.1 30.8C11.8 26.9 14.2 23.2 17.3 20.4C20.4 17.6 24.3 15.3 28.6 14C32.9 12.7 38.5 12.4 43 12.8C47.5 13.2 52.1 14.2 55.9 16.4C59.6 18.6 63.2 22.4 65.5 26C67.8 29.6 68.4 34.1 69.4 38C70.4 41.9 71.2 45.5 71.3 49.3C71.4 53.1 70.9 57.2 70.2 60.6C69.5 64 67.7 68.1 67.2 69.6L62.6 75.6L60.4 80.9L57.4 80L55.1 86L54.4 83L51.4 87.6C51.1 86.2 50.5 81.9 49.9 79.4C49.3 76.9 48 75.4 47.6 72.6C47.2 69.8 47.6 64.4 47.6 62.8C47 63.4 45.3 65.4 44 66.5C42.7 67.6 40.7 69.1 40 69.6C39.5 69.2 38 67.3 37 67C36 66.7 34.5 67.8 34 68C33.5 67.8 32 66.5 31 66.5C30 66.5 28.5 67.8 28 68C27.5 67.6 26 65.7 25 65.5C24 65.3 22.5 66.4 22 66.6C21.5 66.2 20 64.6 19 64.5C18 64.4 16.5 65.6 16 65.8C15.7 65.6 14.8 64.4 14 64.5C13.2 64.6 11.9 66.2 11.5 66.6Z"/><g clip-path="url(#hc5)"><use href="#ring" y="6"/></g><path fill="none" stroke="#5e4034" stroke-width=".7" d="M31 14.500C31.500 11 36 10 38.500 13"/><path fill="#f7cfd2" d="M61.9 55.3 L64.6 60.6 L63.6 65.8 L59.6 69.6 L56 71.5 L59.5 66.5 L61.6 61Z"/></svg></div><div class="card sel" style="left:116.3px;top:332.5px;height:120px"><svg width="88" height="124" viewBox="0 0 88 124" style="left:0;top:0"><clipPath id="hc6"><path d="M6.5 69.6C6.4 69 6.1 68.2 5.7 65.8C5.3 63.4 4.4 58.7 4.2 55.3C4 51.9 4.2 48 4.6 45.5C5 43 5.4 43.1 6.4 40.4C7.4 37.7 8.4 32.7 10.4 29.2C12.4 25.7 15 22.1 18.5 19.6C22 17.1 27 15.3 31.3 14.4C35.6 13.5 39.8 13.4 44.1 14C48.4 14.6 53.5 15.7 57 18C60.5 20.3 63.3 24.3 65 27.6C66.7 30.9 66.7 34.4 67.4 38C68.1 41.6 69.1 45.5 69.2 49.3C69.3 53.1 67.9 57.9 68.1 60.6C68.3 63.4 70 64.9 70.4 65.8L66.6 68C66 69 64.2 72.1 62.8 74C61.4 75.9 59.5 78 58.3 79.4C57 80.8 56.5 81.2 55.3 82.4C54 83.7 51.5 86.2 50.8 86.9L47.8 76L44.8 83.9L41 75L38 83L35.8 71L32 76.5C32.2 75.4 33.4 71.9 33.5 70C33.6 68.1 33.5 66.1 32.8 65C32 63.9 30.2 64.5 29 63.6C27.8 62.7 27.2 61.7 25.3 59.8C23.4 57.9 19.7 54.5 17.7 52.3C15.7 50 13.9 47.3 13.2 46.3C13.3 47.8 13.6 52.7 14 55.3C14.4 57.9 14.1 59.2 15.5 62C16.9 64.8 21.1 70.2 22.2 71.9C21.4 71.8 19.3 71.7 17.7 71C16.1 70.3 13.4 68.5 12.5 68C12 68.3 10.5 69.7 9.5 70C8.5 70.3 7 69.7 6.5 69.6Z"/></clipPath><use href="#bust"/><path fill="url(#hg)" d="M6.5 69.6C6.4 69 6.1 68.2 5.7 65.8C5.3 63.4 4.4 58.7 4.2 55.3C4 51.9 4.2 48 4.6 45.5C5 43 5.4 43.1 6.4 40.4C7.4 37.7 8.4 32.7 10.4 29.2C12.4 25.7 15 22.1 18.5 19.6C22 17.1 27 15.3 31.3 14.4C35.6 13.5 39.8 13.4 44.1 14C48.4 14.6 53.5 15.7 57 18C60.5 20.3 63.3 24.3 65 27.6C66.7 30.9 66.7 34.4 67.4 38C68.1 41.6 69.1 45.5 69.2 49.3C69.3 53.1 67.9 57.9 68.1 60.6C68.3 63.4 70 64.9 70.4 65.8L66.6 68C66 69 64.2 72.1 62.8 74C61.4 75.9 59.5 78 58.3 79.4C57 80.8 56.5 81.2 55.3 82.4C54 83.7 51.5 86.2 50.8 86.9L47.8 76L44.8 83.9L41 75L38 83L35.8 71L32 76.5C32.2 75.4 33.4 71.9 33.5 70C33.6 68.1 33.5 66.1 32.8 65C32 63.9 30.2 64.5 29 63.6C27.8 62.7 27.2 61.7 25.3 59.8C23.4 57.9 19.7 54.5 17.7 52.3C15.7 50 13.9 47.3 13.2 46.3C13.3 47.8 13.6 52.7 14 55.3C14.4 57.9 14.1 59.2 15.5 62C16.9 64.8 21.1 70.2 22.2 71.9C21.4 71.8 19.3 71.7 17.7 71C16.1 70.3 13.4 68.5 12.5 68C12 68.3 10.5 69.7 9.5 70C8.5 70.3 7 69.7 6.5 69.6Z"/><g clip-path="url(#hc6)"><use href="#ring" y="6"/></g><path fill="#7b5646" d="M33.7 15.1C33.2 14.6 31.5 13.1 30.5 12.4C29.5 11.6 28.2 11 27.8 10.8C28.5 10.8 31 10.6 32.1 10.9C33.2 11.3 34.1 12.5 34.5 12.8C34.8 12.4 35.6 10.9 36.4 10.3C37.3 9.6 39.1 9.1 39.6 8.8C39.4 9.3 38.8 10.8 38 11.9C37.3 12.9 36 14.6 35.3 15.1C34.6 15.6 34 15.1 33.7 15.1Z"/><path fill="#f7cfd2" d="M62.1 55.3 L65.1 60.6 L64 65.8 L59.1 68.9 L59.8 62.8Z"/></svg></div><div id="selring"></div><div class="card " style="left:21.5px;top:473.5px;height:120px"><svg width="88" height="124" viewBox="0 0 88 124" style="left:0;top:0"><clipPath id="hc7"><path d="M14.5 80C13.9 78.8 12.1 75.8 10.8 72.6C9.6 69.4 7.9 65.1 7 60.6C6.1 56.1 5.5 49.6 5.5 45.5C5.5 41.4 6.4 38.5 7 36C7.6 33.5 8.4 33 9.3 30.8C10.2 28.6 12 24.1 12.5 22.8C12.2 21.2 11.1 16.6 11 13.2C10.9 9.8 11.6 4.5 11.7 2.7C12.6 3.3 15.3 5.1 17 6.5C18.7 7.9 20.6 9.3 22 11C23.4 12.7 24.9 15.6 25.5 16.5C26.1 16.3 27.8 15.4 29 15.2C30.2 14.9 32.3 15 33 15L36.4 12C36.6 11 36.6 8 37.5 6C38.4 4 40.8 1.2 41.5 0.3C42.6 0.1 45.9 -1 48 -1C50.1 -1 53 0.1 54 0.3C54.5 1.6 56.5 5.3 57 8.3C57.5 11.3 57.2 16.8 57.2 18.5C58.2 19.8 61.5 23.4 63 26C64.5 28.6 65.5 31.7 66.4 34.3C67.4 36.9 68.1 38.5 68.7 41.8C69.3 45 69.2 50.8 70.2 53.8C71.2 56.8 74 58.8 74.7 59.8L68.7 60.6L69.4 71L66.4 72.6L64.9 82.4L62.6 79.4L59.6 85.4L55.1 83L50.6 87.6L47.6 78.6L42.3 87.6C42.2 86.6 42.2 83.4 41.6 81.6C41 79.8 39.1 77.8 38.6 77L34 77C34.3 76.3 35.1 74.1 35.6 72.6C36.1 71.1 37.1 69 37 68C36.9 67 35.5 67.6 34.8 66.6C34.1 65.6 33.1 63.9 32.6 62C32.1 60.1 32.3 57.2 31.8 55.3C31.3 53.4 30.7 52.8 29.6 50.8C28.5 48.8 26.5 45.7 25 43.3C23.5 40.9 21.2 37.6 20.5 36.5C20 38 18.6 42.1 17.5 45.5C16.4 48.9 14.7 53.5 13.8 56.8C12.9 60 12.4 62.1 12.3 65C12.2 67.9 12.6 71.5 13 74C13.4 76.5 14.2 79 14.5 80Z"/></clipPath><use href="#bust"/><path fill="url(#hg)" d="M14.5 80C13.9 78.8 12.1 75.8 10.8 72.6C9.6 69.4 7.9 65.1 7 60.6C6.1 56.1 5.5 49.6 5.5 45.5C5.5 41.4 6.4 38.5 7 36C7.6 33.5 8.4 33 9.3 30.8C10.2 28.6 12 24.1 12.5 22.8C12.2 21.2 11.1 16.6 11 13.2C10.9 9.8 11.6 4.5 11.7 2.7C12.6 3.3 15.3 5.1 17 6.5C18.7 7.9 20.6 9.3 22 11C23.4 12.7 24.9 15.6 25.5 16.5C26.1 16.3 27.8 15.4 29 15.2C30.2 14.9 32.3 15 33 15L36.4 12C36.6 11 36.6 8 37.5 6C38.4 4 40.8 1.2 41.5 0.3C42.6 0.1 45.9 -1 48 -1C50.1 -1 53 0.1 54 0.3C54.5 1.6 56.5 5.3 57 8.3C57.5 11.3 57.2 16.8 57.2 18.5C58.2 19.8 61.5 23.4 63 26C64.5 28.6 65.5 31.7 66.4 34.3C67.4 36.9 68.1 38.5 68.7 41.8C69.3 45 69.2 50.8 70.2 53.8C71.2 56.8 74 58.8 74.7 59.8L68.7 60.6L69.4 71L66.4 72.6L64.9 82.4L62.6 79.4L59.6 85.4L55.1 83L50.6 87.6L47.6 78.6L42.3 87.6C42.2 86.6 42.2 83.4 41.6 81.6C41 79.8 39.1 77.8 38.6 77L34 77C34.3 76.3 35.1 74.1 35.6 72.6C36.1 71.1 37.1 69 37 68C36.9 67 35.5 67.6 34.8 66.6C34.1 65.6 33.1 63.9 32.6 62C32.1 60.1 32.3 57.2 31.8 55.3C31.3 53.4 30.7 52.8 29.6 50.8C28.5 48.8 26.5 45.7 25 43.3C23.5 40.9 21.2 37.6 20.5 36.5C20 38 18.6 42.1 17.5 45.5C16.4 48.9 14.7 53.5 13.8 56.8C12.9 60 12.4 62.1 12.3 65C12.2 67.9 12.6 71.5 13 74C13.4 76.5 14.2 79 14.5 80Z"/><g clip-path="url(#hc7)"><use href="#ring" y="5"/></g><path fill="#f7cfd2" d="M60.4 54 L62 58 L64.6 61 L62.8 66 L58.1 69.6 L60.2 64 L60.4 58Z"/></svg></div><div class="card " style="left:116.3px;top:473.5px;height:120px"><svg width="88" height="124" viewBox="0 0 88 124" style="left:0;top:0"><clipPath id="hc8"><path d="M9.5 56.8C9.1 55.5 7.6 52.4 7.2 49.3C6.8 46.2 6.8 41.1 7.2 38C7.6 34.9 8 33.7 9.6 30.8C11.2 27.9 13.8 23.1 16.9 20.4C20 17.7 23.8 15.6 28.1 14.4C32.4 13.2 38 12.7 42.5 13.2C47 13.7 52 14.9 55.4 17.2C58.8 19.5 60.8 23.5 62.8 27C64.8 30.5 66.3 34.3 67.4 38C68.5 41.7 69.3 45.5 69.6 49.3C69.9 53.1 69.7 56.7 69.2 60.6C68.7 64.5 67.7 69.6 66.6 72.6C65.5 75.6 64.7 77 62.8 78.6C60.9 80.2 57.8 81.4 55.3 82.4C52.8 83.4 49.7 84.5 47.8 84.6C45.9 84.7 44.4 83.3 43.7 83C43.8 82 43.7 79.5 44 77C44.3 74.5 45.3 70.7 45.6 68C45.9 65.3 45.9 61.8 45.9 60.6L41.8 63.6L40.3 58.3L38 60.6C37.1 59.8 34.5 57.5 32.8 56C31 54.5 28.4 52.2 27.5 51.5L25.3 53C24.8 52.4 23.2 51.4 22.2 49.3C21.2 47.2 20.2 43 19.2 40.3C18.2 37.5 16.7 34 16.2 32.8C15.7 33.9 13.9 36.8 13.2 39.5C12.4 42.2 12.1 46.5 11.7 49.3C11.3 52 11.4 54.8 11 56C10.6 57.2 9.8 56.7 9.5 56.8Z"/></clipPath><use href="#bust"/><path fill="url(#hg)" d="M9.5 56.8C9.1 55.5 7.6 52.4 7.2 49.3C6.8 46.2 6.8 41.1 7.2 38C7.6 34.9 8 33.7 9.6 30.8C11.2 27.9 13.8 23.1 16.9 20.4C20 17.7 23.8 15.6 28.1 14.4C32.4 13.2 38 12.7 42.5 13.2C47 13.7 52 14.9 55.4 17.2C58.8 19.5 60.8 23.5 62.8 27C64.8 30.5 66.3 34.3 67.4 38C68.5 41.7 69.3 45.5 69.6 49.3C69.9 53.1 69.7 56.7 69.2 60.6C68.7 64.5 67.7 69.6 66.6 72.6C65.5 75.6 64.7 77 62.8 78.6C60.9 80.2 57.8 81.4 55.3 82.4C52.8 83.4 49.7 84.5 47.8 84.6C45.9 84.7 44.4 83.3 43.7 83C43.8 82 43.7 79.5 44 77C44.3 74.5 45.3 70.7 45.6 68C45.9 65.3 45.9 61.8 45.9 60.6L41.8 63.6L40.3 58.3L38 60.6C37.1 59.8 34.5 57.5 32.8 56C31 54.5 28.4 52.2 27.5 51.5L25.3 53C24.8 52.4 23.2 51.4 22.2 49.3C21.2 47.2 20.2 43 19.2 40.3C18.2 37.5 16.7 34 16.2 32.8C15.7 33.9 13.9 36.8 13.2 39.5C12.4 42.2 12.1 46.5 11.7 49.3C11.3 52 11.4 54.8 11 56C10.6 57.2 9.8 56.7 9.5 56.8Z"/><g clip-path="url(#hc8)"><use href="#ring" y="4"/></g></svg></div><div class="card " style="left:21.5px;top:614.2px;height:120px"><svg width="88" height="124" viewBox="0 0 88 124" style="left:0;top:0"><clipPath id="hc9"><path d="M4.8 52C4.7 50 3.4 43.4 4 40.2C4.6 37 6.1 35.9 8.5 32.6C10.9 29.3 15.1 23.6 18.3 20.6C21.6 17.6 24.6 15.8 28 14.6C31.4 13.3 34.6 12.7 38.6 13.1C42.6 13.5 48.4 14.9 52.1 16.8C55.9 18.7 58.7 21.8 61.1 24.4C63.5 27 65 29.4 66.4 32.6C67.8 35.9 68.7 40.7 69.4 43.9C70.2 47.1 70.7 50.6 70.9 52L71 58L4 58L4.8 52Z"/></clipPath><use href="#bust"/><path fill="url(#hg2)" d="M4.8 52C4.7 50 3.4 43.4 4 40.2C4.6 37 6.1 35.9 8.5 32.6C10.9 29.3 15.1 23.6 18.3 20.6C21.6 17.6 24.6 15.8 28 14.6C31.4 13.3 34.6 12.7 38.6 13.1C42.6 13.5 48.4 14.9 52.1 16.8C55.9 18.7 58.7 21.8 61.1 24.4C63.5 27 65 29.4 66.4 32.6C67.8 35.9 68.7 40.7 69.4 43.9C70.2 47.1 70.7 50.6 70.9 52L71 58L4 58L4.8 52Z"/><g clip-path="url(#hc9)"><use href="#ring" y="2"/></g><path fill="#f6e6d6" d="M16.500 48L17.300 48L17.300 54L16.500 54ZM21.500 50L23 49.500L23 54L21.500 54ZM29.800 49.500L31 49L31 54L29.800 54Z"/><path fill="#7b5646" d="M32.500 12.800L34 10L36.200 10.800L36.500 13Z"/></svg></div><div class="card " style="left:116.3px;top:614.2px;height:120px"><svg width="88" height="124" viewBox="0 0 88 124" style="left:0;top:0"><clipPath id="hc10"><path d="M5.8 52.6C5.9 50.6 5.8 44.5 6.2 40.9C6.7 37.3 6.9 34.4 8.5 31.1C10.1 27.9 12.9 24.1 16 21.4C19.1 18.7 23.3 16.4 27.3 15C31.3 13.6 35.8 12.9 40 13.1C44.2 13.3 49 14.4 52.8 16.1C56.6 17.9 60 20.7 62.6 23.6C65.2 26.5 67.1 30 68.6 33.4C70 36.8 70.8 42.1 71.3 43.9L75 44.7L71.6 46.9L71.6 58L5.8 58L5.8 52.6Z"/></clipPath><use href="#bust"/><path fill="url(#hg2)" d="M5.8 52.6C5.9 50.6 5.8 44.5 6.2 40.9C6.7 37.3 6.9 34.4 8.5 31.1C10.1 27.9 12.9 24.1 16 21.4C19.1 18.7 23.3 16.4 27.3 15C31.3 13.6 35.8 12.9 40 13.1C44.2 13.3 49 14.4 52.8 16.1C56.6 17.9 60 20.7 62.6 23.6C65.2 26.5 67.1 30 68.6 33.4C70 36.8 70.8 42.1 71.3 43.9L75 44.7L71.6 46.9L71.6 58L5.8 58L5.8 52.6Z"/><g clip-path="url(#hc10)"><use href="#ring" y="2"/></g><path fill="#f6e6d6" d="M20 42L21 42L21.200 54L20 54ZM23 45L24 44.500L25 54L23 54Z"/></svg></div><svg class="chk" style="left:155.3px;top:179.5px" width="9" height="7" viewBox="0 0 9 7"><path d="M1.200 3.200L3.700 6L8.400 1" fill="none" stroke="#2f9be2" stroke-width="2" stroke-linejoin="round"/></svg><svg class="chk" style="left:60.8px;top:320px" width="9" height="7" viewBox="0 0 9 7"><path d="M1.200 3.200L3.700 6L8.400 1" fill="none" stroke="#2f9be2" stroke-width="2" stroke-linejoin="round"/></svg><svg class="chk" style="left:155.3px;top:320px" width="9" height="7" viewBox="0 0 9 7"><path d="M1.200 3.200L3.700 6L8.400 1" fill="none" stroke="#2f9be2" stroke-width="2" stroke-linejoin="round"/></svg><svg class="chk" style="left:60.8px;top:460.5px" width="9" height="7" viewBox="0 0 9 7"><path d="M1.200 3.200L3.700 6L8.400 1" fill="none" stroke="#2f9be2" stroke-width="2" stroke-linejoin="round"/></svg><svg class="chk" style="left:155.3px;top:460.5px" width="9" height="7" viewBox="0 0 9 7"><path d="M1.200 3.200L3.700 6L8.400 1" fill="none" stroke="#2f9be2" stroke-width="2" stroke-linejoin="round"/></svg><svg class="chk" style="left:60.8px;top:601px" width="9" height="7" viewBox="0 0 9 7"><path d="M1.200 3.200L3.700 6L8.400 1" fill="none" stroke="#2f9be2" stroke-width="2" stroke-linejoin="round"/></svg><svg class="chk" style="left:155.3px;top:601px" width="9" height="7" viewBox="0 0 9 7"><path d="M1.200 3.200L3.700 6L8.400 1" fill="none" stroke="#2f9be2" stroke-width="2" stroke-linejoin="round"/></svg><div id="sbar"></div><div id="foot"><svg style="left:21px;top:13.300px" width="7" height="10" viewBox="0 0 7 10"><path d="M1 1L4.300 4.400L1 7.800" fill="none" stroke="#8c8c8c" stroke-width="1.300" stroke-linecap="round" stroke-linejoin="round"/></svg><span>Search more items</span></div></div><div id="view"><svg style="left:-1px;top:0" width="640" height="717" viewBox="280 73 640 717"><defs><linearGradient id="cj" gradientUnits="userSpaceOnUse" x1="486" y1="0" x2="714" y2="0"><stop offset="0" stop-color="#1e2338"/><stop offset=".3" stop-color="#22283e"/><stop offset=".38" stop-color="#1f2439"/><stop offset=".5" stop-color="#252b41"/><stop offset=".57" stop-color="#242a41"/><stop offset=".61" stop-color="#1b2447"/><stop offset=".645" stop-color="#1b2345"/><stop offset=".66" stop-color="#1e2238"/><stop offset=".8" stop-color="#22283e"/><stop offset="1" stop-color="#1e2338"/></linearGradient><linearGradient id="chg" x1="0" y1="0" x2="0" y2="1"><stop offset="0" stop-color="#6d4835"/><stop offset=".28" stop-color="#8a6048"/><stop offset=".55" stop-color="#7a523c"/><stop offset="1" stop-color="#6b4634"/></linearGradient><pattern id="plaid" width="14" height="15" patternUnits="userSpaceOnUse"><rect width="14" height="15" fill="#3b3b4a"/><path d="M0 4H14M0 12.500H14" stroke="#8d8d9c" stroke-width=".7" opacity=".7"/><path d="M3 0V15M10.500 0V15" stroke="#8d8d9c" stroke-width=".7" opacity=".6"/><path d="M6.500 0V15" stroke="#23232e" stroke-width="1.2" opacity=".6"/></pattern><filter id="cb" x="-10%" y="-10%" width="120%" height="120%"><feGaussianBlur stdDeviation="0.6"/></filter></defs><path fill="#fbe7dc" d="M562.3 590.9C562.5 595.9 562.8 611.4 563.4 621C563.9 630.5 566 640.1 565.6 648.3C565.1 656.5 561.8 663.3 560.7 670.2C559.5 677 558.5 682 558.5 689.3C558.5 696.6 560.3 709.8 560.7 713.9L575.4 713.9C576 709.8 577.8 697 578.7 689.3C579.6 681.5 580.2 674.3 580.9 667.4C581.5 660.6 581.3 656 582.5 648.3C583.7 640.6 586.3 630.5 588 621C589.6 611.4 591.6 595.9 592.3 590.9L562.3 590.9Z"/><path fill="#fbe7dc" d="M637.2 590.9C637 595.9 636.4 611.4 636.1 621C635.7 630.5 634.6 640.1 635.2 648.3C635.9 656.5 638.9 663.3 639.9 670.2C640.8 677 641.1 682 641 689.3C640.9 696.6 639.6 709.8 639.3 713.9L624.6 713.9C624.1 709.8 622.7 697 621.9 689.3C621 681.5 620.2 674.3 619.7 667.4C619.1 660.6 619.7 656 618.6 648.3C617.5 640.6 614.8 630.5 613.1 621C611.5 611.4 609.5 595.9 608.7 590.9L637.2 590.9Z"/><path fill="#f6c3c6" d="M582 596.4C581.5 600.9 580.6 615.1 579.2 623.7C577.9 632.4 574.8 640.6 573.8 648.3C572.8 656 573.3 663.3 573.2 670.2C573.1 677 573.5 682 573.2 689.3C573 696.6 571.9 709.8 571.6 713.9L575.4 713.9C576 709.8 577.8 697 578.7 689.3C579.6 681.5 580.2 674.3 580.9 667.4C581.5 660.6 581.3 656 582.5 648.3C583.7 640.6 586.3 629.6 588 621C589.6 612.3 591.6 600.5 592.3 596.4L582 596.4Z"/><path fill="#f6c3c6" d="M630.6 596.4C630.5 600.9 630.4 615.1 630.1 623.7C629.7 632.4 627.8 640.6 628.4 648.3C629.1 656 632.7 663.3 633.9 670.2C635.1 677 635.3 682 635.5 689.3C635.7 696.6 635.1 709.8 635 713.9L639.3 713.9C639.6 709.8 640.9 696.6 641 689.3C641.1 682 640.8 677 639.9 670.2C638.9 663.3 635.9 656.5 635.2 648.3C634.6 640.1 635.7 629.6 636.1 621C636.4 612.3 637 600.5 637.2 596.4L630.6 596.4Z"/><path fill="#141416" d="M560.1 712.8L575.4 712.8C575.2 716.2 574.6 726.7 574.3 733C574 739.3 573.9 747.8 573.8 750.8L559 750.8C559.1 747.8 559.4 739.3 559.6 733C559.7 726.7 560 716.2 560.1 712.8Z"/><path fill="#141416" d="M624.6 712.8L639.3 712.8C639.5 716.2 640.2 726.7 640.4 733C640.7 739.3 640.9 747.8 641 750.8L626.2 750.8C626.2 747.8 626.5 739.3 626.2 733C626 726.7 624.9 716.2 624.6 712.8Z"/><path fill="#2b2226" d="M559 754.9C559.5 753.9 560.5 750.1 561.7 748.9C563 747.6 565 747.2 566.7 747.2C568.3 747.2 570.3 747.6 571.6 748.9C572.9 750.1 573.9 753.9 574.3 754.9C574.9 755.9 577 758 577.6 760.9C578.1 763.8 577.6 770.4 577.6 772.3L556.8 772.3C556.8 770.4 556.5 763.8 556.8 760.9C557.2 758 558.7 755.9 559 754.9Z"/><path fill="#2b2226" d="M625.7 754.9C626.1 753.9 627.1 750.1 628.4 748.9C629.7 747.6 631.7 747.2 633.3 747.2C635 747.2 637 747.6 638.3 748.9C639.5 750.1 640.5 753.9 641 754.9C641.4 755.9 643.3 758 643.7 760.9C644.2 763.8 643.7 770.4 643.7 772.3L622.4 772.3C622.4 770.4 621.9 763.8 622.4 760.9C623 758 625.1 755.9 625.7 754.9Z"/><path fill="#19141699" d="M556.8 766.9 L577.6 766.9 L577.6 772.3 L556.8 772.3Z"/><path fill="#19141699" d="M622.4 766.9 L643.7 766.9 L643.7 772.3 L622.4 772.3Z"/><clipPath id="skc"><path d="M564.2 540.5L637 540.5C638.2 544.6 641.5 557.2 644 565.1C646.6 573 650.9 584.1 652.3 587.9C650 588.5 643.9 590.5 638.8 591.8C633.6 593 628 594.3 621.2 595.3C614.5 596.2 606.3 597.6 598.4 597.5C590.5 597.5 580.6 596 573.9 594.9C567.1 593.8 562.4 592.2 558.1 591.1C553.8 589.9 549.7 588.4 548.1 587.9C549.4 584.1 553.6 573 556.3 565.1C559 557.2 562.9 544.6 564.2 540.5Z"/></clipPath><path fill="#3b3b4a" d="M564.2 540.5L637 540.5C638.2 544.6 641.5 557.2 644 565.1C646.6 573 650.9 584.1 652.3 587.9C650 588.5 643.9 590.5 638.8 591.8C633.6 593 628 594.3 621.2 595.3C614.5 596.2 606.3 597.6 598.4 597.5C590.5 597.5 580.6 596 573.9 594.9C567.1 593.8 562.4 592.2 558.1 591.1C553.8 589.9 549.7 588.4 548.1 587.9C549.4 584.1 553.6 573 556.3 565.1C559 557.2 562.9 544.6 564.2 540.5Z"/><g clip-path="url(#skc)"><path d="M559.6 552.7Q600.4 554.4 641.3 552.7" fill="none" stroke="#9c9cac" stroke-width=".7" opacity="0.55"/><path d="M558.7 555.6Q600.4 557.9 642.1 555.6" fill="none" stroke="#9c9cac" stroke-width=".7" opacity="0.3"/><path d="M555.1 567.1Q600.3 571.9 645.5 567.1" fill="none" stroke="#9c9cac" stroke-width=".7" opacity="0.55"/><path d="M554 570.5Q600.2 576 646.5 570.5" fill="none" stroke="#9c9cac" stroke-width=".7" opacity="0.3"/><path d="M549.9 583.5Q600.1 591.8 650.3 583.5" fill="none" stroke="#9c9cac" stroke-width=".7" opacity="0.55"/><path d="M548.7 587.3Q600.1 596.5 651.5 587.3" fill="none" stroke="#9c9cac" stroke-width=".7" opacity="0.3"/><path d="M564 545L548 600" stroke="#23232e" stroke-width="1.1" opacity=".55"/><path d="M566.5 545L551.6 600" stroke="#9c9cac" stroke-width=".6" opacity=".5"/><path d="M569.6 545L556 600" stroke="#23232e" stroke-width="1.1" opacity=".55"/><path d="M575.2 545L564 600" stroke="#23232e" stroke-width="1.1" opacity=".55"/><path d="M577.7 545L567.6 600" stroke="#9c9cac" stroke-width=".6" opacity=".5"/><path d="M580.8 545L572 600" stroke="#23232e" stroke-width="1.1" opacity=".55"/><path d="M586.5 545L580 600" stroke="#23232e" stroke-width="1.1" opacity=".55"/><path d="M589 545L583.6 600" stroke="#9c9cac" stroke-width=".6" opacity=".5"/><path d="M592.1 545L588 600" stroke="#23232e" stroke-width="1.1" opacity=".55"/><path d="M597.7 545L596 600" stroke="#23232e" stroke-width="1.1" opacity=".55"/><path d="M600.2 545L599.6 600" stroke="#9c9cac" stroke-width=".6" opacity=".5"/><path d="M603.3 545L604 600" stroke="#23232e" stroke-width="1.1" opacity=".55"/><path d="M608.9 545L612 600" stroke="#23232e" stroke-width="1.1" opacity=".55"/><path d="M611.4 545L615.6 600" stroke="#9c9cac" stroke-width=".6" opacity=".5"/><path d="M614.5 545L620 600" stroke="#23232e" stroke-width="1.1" opacity=".55"/><path d="M620.2 545L628 600" stroke="#23232e" stroke-width="1.1" opacity=".55"/><path d="M622.7 545L631.6 600" stroke="#9c9cac" stroke-width=".6" opacity=".5"/><path d="M625.8 545L636 600" stroke="#23232e" stroke-width="1.1" opacity=".55"/><path d="M631.4 545L644 600" stroke="#23232e" stroke-width="1.1" opacity=".55"/><path d="M633.9 545L647.6 600" stroke="#9c9cac" stroke-width=".6" opacity=".5"/><path d="M637 545L652 600" stroke="#23232e" stroke-width="1.1" opacity=".55"/></g><path fill="#7f8fc4" d="M486.8 528.7 L492.3 530.2 L503.6 543 L496.1 544.5 L487.8 534.4Z"/><path fill="#7f8fc4" d="M713.2 528.7 L708 530.2 L696.7 543.5 L704.2 544.5 L712.3 534.4Z"/><path fill="url(#cj)" d="M565.3 450.5C562.8 452.9 557.7 457.3 550.2 464.8C542.7 472.3 530.8 484.7 520.2 495.3C509.5 505.9 492 522.9 486.3 528.4C486.5 529.3 485.7 531.4 487.4 534C489 536.6 494.6 542.4 496.1 544.1L503.6 544.1C507.1 540.1 516.9 527.3 524.7 520C532.4 512.7 542.7 505.8 550.2 500.5C557.7 495.1 566.5 490.2 569.8 488.1L565.3 450.5Z"/><path fill="url(#cj)" d="M635 450.5C637.5 452.9 642.6 457.3 650.1 464.8C657.6 472.3 669.6 484.7 680.2 495.3C690.7 505.9 708 522.9 713.5 528.4C713.4 529.3 714.5 531.4 712.9 534C711.4 536.6 705.7 542.4 704.2 544.1L696.4 544.5C692.9 540.8 683.4 529.1 675.6 522C667.9 514.8 657.6 507.3 650.1 501.7C642.6 496 633.8 490.4 630.5 488.1L635 450.5Z"/><path fill="#8e9acb" stroke="#1c2138" stroke-width="1.2" stroke-linejoin="round" d="M486.2 528.2 L489 529.5 L497 534.5 L505.4 540.2 L503.6 544.4 L494.2 543.6 L486.2 533.4Z"/><path fill="#8e9acb" stroke="#1c2138" stroke-width="1.2" stroke-linejoin="round" d="M713.2 528.2 L710.4 529.5 L702.4 534.5 L694 540.2 L695.8 544.4 L705.2 543.6 L713.2 533.4Z"/><path fill="#fbe6dc" d="M487 532.5C485.5 533.9 480.8 537.9 478 541C475.2 544.1 471.6 549.3 470.3 551C470.6 551.4 471.2 553 472 553.5C472.8 554 474.5 553.8 475 553.8C476.8 552.1 483.4 545.9 486 543.5C488.6 541.1 489.8 540.2 490.5 539.5L490.8 546L493.2 546.6C493.5 545.7 494.1 542.7 495.2 541C496.2 539.3 498.8 537.2 499.5 536.5C498.9 535.9 497.4 533.9 496 533C494.6 532.1 492.5 531.1 491 531C489.5 530.9 487.7 532.2 487 532.5Z"/><path fill="#fbe6dc" d="M712.4 532.5C713.9 533.9 718.6 537.9 721.4 541C724.2 544.1 727.8 549.3 729.1 551C728.8 551.4 728.2 553 727.4 553.5C726.6 554 724.9 553.8 724.4 553.8C722.6 552.1 716 545.9 713.4 543.5C710.8 541.1 709.6 540.2 708.9 539.5L708.6 546L706.2 546.6C705.9 545.7 705.2 542.7 704.2 541C703.1 539.3 700.6 537.2 699.9 536.5C700.5 535.9 702 533.9 703.4 533C704.8 532.1 706.9 531.1 708.4 531C709.9 530.9 711.7 532.2 712.4 532.5Z"/><path fill="none" stroke="#f3b9bd" stroke-width="1.6" opacity=".8" d="M489 538.5L476 551.500M710.400 538.500L723.400 551.500"/><path fill="none" stroke="#5a3a40" stroke-width=".6" stroke-dasharray=".8 1.6" opacity=".7" d="M486 541.500L473.500 553.600M713.400 541.500L725.900 553.600M484 535L471 549.500M715.400 535L728.400 549.500"/><path fill="url(#cj)" d="M586.6 446.2C585.1 446.5 581.6 446.7 577.6 447.7C573.6 448.8 565.1 451.8 562.6 452.6C563.1 455.1 564.7 460.8 565.6 467.6C566.4 474.4 567.6 484.4 567.8 493.2C568.1 501.9 567.7 513.2 567.1 520.2C566.4 527.2 564.5 531.1 563.8 535.3C563 539.4 562.8 543.4 562.6 545C566.3 545.1 579.3 545.6 585.1 545.5C590.9 545.4 594.6 544.9 597.1 544.3C599.6 543.6 599.6 542 600.2 541.6C600.7 542.2 596.9 544.5 603.2 545C609.4 545.6 632 545 637.7 545C637.5 543.4 637.2 539.4 636.5 535.3C635.8 531.1 634.2 527.2 633.5 520.2C632.9 513.2 632.2 501.9 632.5 493.2C632.7 484.4 634.2 474.4 635 467.6C635.9 460.8 637.3 455.1 637.7 452.6C635.2 451.8 626.7 448.8 622.7 447.7C618.7 446.7 615.2 446.5 613.7 446.2C611.4 447 604.7 451.1 600.2 451.1C595.6 451.1 588.9 447 586.6 446.2Z"/><path fill="#2a3660" opacity="0" filter="url(#cb)" d="M621.2 479.6C623.2 475.9 628.4 472.9 630.2 475.1C632 477.4 631.8 486.6 632 493.2C632.2 499.7 633.2 509.7 631.4 514.2C629.6 518.7 623.4 523 621.2 520.2C619 517.5 618.2 504.4 618.2 497.7C618.2 490.9 619.2 483.4 621.2 479.6Z"/><path fill="#f9e3d8" d="M596.6 440.2 L604.1 440.2 L604.6 450.2 L596.1 450.2Z"/><path fill="#fafafa" d="M592.6 447.7 L607.7 447.7 L606.2 456.3 L594.1 456.3Z"/><path fill="#fbfbfd" d="M591.6 443.9 L598.1 447.9 L595.4 450.8 L587.8 448.7Z"/><path fill="#fbfbfd" d="M608.9 443.9 L602.6 447.9 L605.4 450.8 L612.7 448.7Z"/><path fill="#22283e" stroke="#a3a8ba" stroke-width=".7" stroke-linejoin="round" d="M578.3 451.1 L587.8 452.6 L595.9 464.6 L599.8 481.9 L598.6 487.9 L577.3 460.8 L580.6 454.8Z"/><path fill="#22283e" stroke="#a3a8ba" stroke-width=".7" stroke-linejoin="round" d="M622.4 451.1 L612.8 452.6 L604.7 464.6 L600.5 481.9 L599.8 488.9 L623 460.8 L619.7 454.8Z"/><path fill="#1a335f" d="M600.2 454.8C598.9 454.1 595 451.4 592.6 450.8C590.3 450.1 587 451 585.9 451.1C585.7 451.8 584.9 454.1 585.1 455.6C585.3 457.1 586.6 459.3 586.9 460.1C588.1 459.9 591.9 460.2 594.1 459.3C596.3 458.4 599.1 455.6 600.2 454.8Z"/><path fill="#1a335f" d="M600.2 454.8C601.4 454.1 605.2 451.4 607.7 450.8C610.1 450.1 613.6 451 614.7 451.1C614.8 451.8 615.4 454.1 615.2 455.6C615 457.1 613.7 459.3 613.4 460.1C612.2 459.9 608.4 460.2 606.2 459.3C604 458.4 601.2 455.6 600.2 454.8Z"/><path stroke="#0f1f42" stroke-width="1" fill="none" d="M587.4 457.8L594.1 452.6 M591.1 459.3L597.9 454.1 M603.2 458.6L610.7 452.6 M607.7 459.3L614.4 454.1"/><path fill="#23407a" d="M597.9 453.3 L602.4 453.3 L602.9 457.1 L597.4 457.1Z"/><path fill="#f4f4f6" d="M599.2 457.4 L601.1 457.4 L601.4 464.6 L605.6 464.9 L600.2 480.8 L594.7 464.9 L598.9 464.6Z"/><path fill="none" stroke="#0f1428" stroke-width="1" d="M611.9 475.1 L626.5 475.1"/><path fill="none" stroke="#2e3a62" stroke-width="1.2" d="M611.9 477.8 L626.5 478.4"/><circle cx="600.9" cy="494.4" r="2.2" fill="#c79a3a"/><circle cx="600.5" cy="493.9" r="1" fill="#f0d27a"/><circle cx="601.2" cy="513.2" r="2.2" fill="#c79a3a"/><circle cx="600.8" cy="512.7" r="1" fill="#f0d27a"/><path fill="#242a41" stroke="#10162b" stroke-width=".7" d="M568.9 512.4 L585.1 512.4 L584.8 520.2 L568.9 522Z"/><path fill="#242a41" stroke="#10162b" stroke-width=".7" d="M615.2 512.4 L632 512.4 L632 522 L615.5 520.2Z"/><path fill="none" stroke="#10162b" stroke-width=".7" opacity=".8" d="M580.6 493.2C580.4 495.2 579.9 500.2 579.4 505.2C578.9 510.2 578 516.7 577.6 523.2C577.2 529.7 577 540.8 576.8 544.3"/><path fill="none" stroke="#10162b" stroke-width=".7" opacity=".8" d="M619.7 493.2C619.9 495.2 620.8 500.2 621.2 505.2C621.7 510.2 622.1 516.7 622.4 523.2C622.7 529.7 622.9 540.8 623 544.3"/><path fill="none" stroke="#10162b" stroke-width=".8" opacity=".9" d="M598.9 487.9C598.8 492.3 598.5 506.3 598.3 514.2C598.1 522.1 597.9 530.3 597.7 535.3C597.5 540.2 597.2 542.5 597.1 544"/><path fill="none" stroke="#10162b" stroke-width=".7" opacity=".7" d="M564.8 452.6C565.3 455.3 567.2 462.8 567.8 469.1C568.4 475.4 568.4 486.6 568.6 490.2"/><path fill="none" stroke="#10162b" stroke-width=".7" opacity=".7" d="M635.5 452.6C635.1 455.3 633.5 462.8 632.9 469.1C632.4 475.4 632.2 486.6 632 490.2"/><path fill="url(#chg)" d="M570.1 427.4C570.6 426.8 572.6 426.6 573.2 423.9C573.8 421.2 573.5 415.1 573.8 411.4C574.1 407.6 574 404.7 575.1 401.3C576.1 398 577.8 394.1 580.1 391.3C582.4 388.5 585.5 385.9 588.8 384.4C592.2 382.9 596.4 382.5 600.1 382.5C603.9 382.5 608.1 382.9 611.4 384.4C614.7 385.9 617.9 388.5 620.2 391.3C622.5 394.1 624.1 398 625.2 401.3C626.2 404.7 626.1 407.8 626.4 411.4C626.8 414.9 626.5 419.9 627.1 422.6C627.7 425.4 629.5 427 629.9 427.9L625.4 425.8L623.7 431.7L620.4 434.2C619.9 435.2 618.2 438.3 617 440.2C615.9 442.1 613.9 444.6 613.3 445.4C612.8 444.8 612.3 442.6 610.2 441.7C608 440.8 603.4 440.1 600.1 440.2C596.8 440.2 592.2 441.2 590.4 442.1C588.5 442.9 589.3 444.9 589.1 445.4C588.4 444.6 586.4 441.9 585.1 440.2C583.8 438.5 582.7 436.6 581.3 435.2C580 433.7 577.7 432 576.9 431.4L575.1 426.4L570.1 427.4Z"/><path fill="#f9e9de" d="M586.3 411.4C586.3 413.2 585.9 419.1 586.1 422.6C586.3 426.2 586.5 429.5 587.6 432.7C588.7 435.8 590.5 439.3 592.6 441.7C594.7 444 597.6 446.7 600.1 446.7C602.6 446.7 605.3 444 607.6 441.7C609.9 439.3 612.6 435.8 613.9 432.7C615.2 429.5 615.2 426.2 615.4 422.6C615.6 419.1 615.2 413.2 615.2 411.4C612.7 410.3 604.9 405.1 600.1 405.1C595.3 405.1 588.6 410.3 586.3 411.4Z"/><path fill="#f6c9c6" opacity=".8" d="M613.9 432.7C613.5 433.6 612.4 436.8 611.4 438.3C610.4 439.8 608.9 440.6 607.6 441.7C606.4 442.7 604.5 444.2 603.9 444.7C604.7 444.6 607.4 444.9 608.9 443.9C610.4 443 611.8 440.8 612.7 438.9C613.5 437 613.7 433.7 613.9 432.7Z"/><path fill="#8a6a68" d="M598.6 445.2 L601.9 445.2 L601.6 446.2 L598.9 446.2Z"/><path fill="#8a6243" d="M587.1 419.6C587.6 419.5 588.8 418.6 589.8 418.6C590.9 418.6 592.6 419.5 593.1 419.6C592.9 420 592.9 421.7 592.1 422.1C591.3 422.5 589.2 422.5 588.3 422.1C587.5 421.7 587.3 420 587.1 419.6Z"/><path fill="#8a6243" d="M607.1 419.6C607.7 419.5 609.5 418.6 610.7 418.6C611.8 418.6 613.4 419.5 613.9 419.6C613.7 420 613.3 421.7 612.4 422.1C611.5 422.5 609.5 422.5 608.6 422.1C607.8 421.7 607.4 420 607.1 419.6Z"/><path stroke="#3a271d" stroke-width="1.100" fill="none" d="M586.1 420.1C586.7 419.8 588.3 418.2 589.6 418.1C590.9 418 592.9 419.2 593.6 419.4"/><path stroke="#3a271d" stroke-width="1.100" fill="none" d="M606.6 419.4C607.3 419.2 609.3 418 610.7 418.1C612 418.2 614 419.8 614.7 420.1"/><path fill="url(#chg)" d="M574.4 411.4C574.5 409.7 574.1 404.7 575.1 401.3C576 398 577.8 394.1 580.1 391.3C582.4 388.5 585.5 385.9 588.8 384.4C592.2 382.9 596.4 382.5 600.1 382.5C603.9 382.5 608.1 382.9 611.4 384.4C614.7 385.9 617.9 388.5 620.2 391.3C622.5 394.1 624.1 398 625.2 401.3C626.3 404.7 626.6 407.8 626.7 411.4C626.8 414.9 626.1 420.8 625.9 422.6L623.3 428.9C623.1 427.9 622.6 424.5 622.1 422.6C621.5 420.8 620.9 419.5 620.2 417.6C619.4 415.7 618.4 413 617.7 411.4C616.9 409.7 616.1 408.2 615.8 407.6C615.9 409.3 616.3 414.9 616.2 417.6C616.1 420.3 615.3 422.8 615.2 423.9C614.7 422.8 613.7 419.7 612.7 417.6C611.6 415.5 610.2 413.2 608.9 411.4C607.6 409.5 605.8 407.2 605.1 406.3C605.8 408.2 608.1 414.1 608.9 417.6C609.7 421.2 609.9 426 610.2 427.6C609.3 427.2 606.8 426.4 605.1 425.1C603.5 423.9 601.8 422.4 600.1 420.1C598.5 417.8 596.6 414.4 595.1 411.4C593.7 408.3 592 403.5 591.4 402C591.1 402.9 590.7 405.6 590.1 407.6C589.5 409.6 588.4 412 587.6 413.9C586.8 415.7 585.5 418 585.1 418.9C585.2 419.9 585.8 422.8 585.7 425.1C585.6 427.4 584.7 431.4 584.5 432.7C583.7 432 581.3 430.6 580.1 428.9C578.8 427.2 577.7 424.5 576.9 422.6C576.2 420.8 576.1 419.5 575.7 417.6C575.3 415.7 574.6 412.4 574.4 411.4Z"/><clipPath id="chc"><path d="M574.4 411.4C574.5 409.7 574.1 404.7 575.1 401.3C576 398 577.8 394.1 580.1 391.3C582.4 388.5 585.5 385.9 588.8 384.4C592.2 382.9 596.4 382.5 600.1 382.5C603.9 382.5 608.1 382.9 611.4 384.4C614.7 385.9 617.9 388.5 620.2 391.3C622.5 394.1 624.1 398 625.2 401.3C626.3 404.7 626.6 407.8 626.7 411.4C626.8 414.9 626.1 420.8 625.9 422.6L623.3 428.9C623.1 427.9 622.6 424.5 622.1 422.6C621.5 420.8 620.9 419.5 620.2 417.6C619.4 415.7 618.4 413 617.7 411.4C616.9 409.7 616.1 408.2 615.8 407.6C615.9 409.3 616.3 414.9 616.2 417.6C616.1 420.3 615.3 422.8 615.2 423.9C614.7 422.8 613.7 419.7 612.7 417.6C611.6 415.5 610.2 413.2 608.9 411.4C607.6 409.5 605.8 407.2 605.1 406.3C605.8 408.2 608.1 414.1 608.9 417.6C609.7 421.2 609.9 426 610.2 427.6C609.3 427.2 606.8 426.4 605.1 425.1C603.5 423.9 601.8 422.4 600.1 420.1C598.5 417.8 596.6 414.4 595.1 411.4C593.7 408.3 592 403.5 591.4 402C591.1 402.9 590.7 405.6 590.1 407.6C589.5 409.6 588.4 412 587.6 413.9C586.8 415.7 585.5 418 585.1 418.9C585.2 419.9 585.8 422.8 585.7 425.1C585.6 427.4 584.7 431.4 584.5 432.7C583.7 432 581.3 430.6 580.1 428.9C578.8 427.2 577.7 424.5 576.9 422.6C576.2 420.8 576.1 419.5 575.7 417.6C575.3 415.7 574.6 412.4 574.4 411.4Z"/></clipPath><g clip-path="url(#chc)"><path fill="none" stroke="#c99f78" stroke-width="2.6" opacity=".6" stroke-dasharray="1.3 .7" d="M575.7 401.3C577.7 400.8 583.5 398.6 587.6 398.2C591.7 397.8 595.9 399.1 600.1 399.1C604.3 399.1 608.5 398 612.7 398.2C616.8 398.4 622.9 399.8 624.9 400.1"/></g><path fill="#7a523c" d="M599.9 383C599.3 382.6 597.8 381 596.6 380.3C595.4 379.5 593.3 378.8 592.6 378.5C593.3 378.5 595.7 377.8 597 378.3C598.3 378.8 599.8 381 600.4 381.5C600.9 381.1 602.5 379.4 603.6 378.8C604.8 378.2 606.8 378.1 607.4 378C606.9 378.4 605.6 379.6 604.6 380.5C603.6 381.4 601.9 382.8 601.4 383.3L599.9 383Z"/></svg></div><div id="right"><div class="lbl">Main Color</div><div id="sw"></div><div id="dropper"><svg style="left:0;top:0" width="29" height="29" viewBox="972 109.500 29 29"><path d="M978.100 132L978.600 128.600L986.700 120.700L990.200 124.200L982 131.800Z" fill="#fbfbfb" stroke="#555" stroke-width="1.500" stroke-linejoin="round"/><path d="M978 132.100L978.300 129.600L980.600 131.900Z" fill="#555" stroke="#555" stroke-width=".8" stroke-linejoin="round"/><path d="M985.700 118L992.700 124.700" stroke="#555" stroke-width="1.900" stroke-linecap="round"/><path d="M988.600 119.400L991.700 116.200L994.600 119L991.400 122.200Z" fill="#555" stroke="#555" stroke-width="1.600" stroke-linejoin="round"/></svg></div><div id="hex">#825A46</div></div></div></div>
</body>
</html>
